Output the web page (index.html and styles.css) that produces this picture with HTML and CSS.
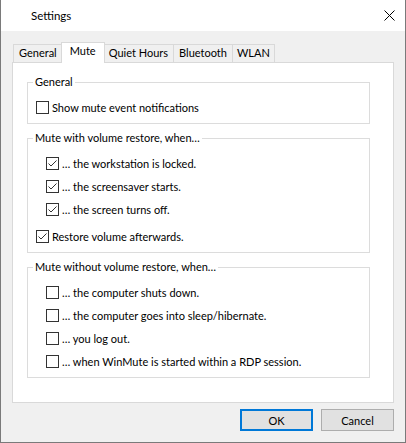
FILE: index.html
```html
<html><head>
<title>Settings</title>
<link rel="stylesheet" href="styles.css">
</head>
<body>
<div class="window">
  <div class="titlebar">
    <span class="title">Settings</span>
    <span class="close">
      <svg width="11" height="11" viewBox="0 0 11 11"><path d="M0.5 0.5 L10.5 10.5 M10.5 0.5 L0.5 10.5" stroke="#000" stroke-width="1" fill="none"/></svg>
    </span>
  </div>
  <div class="body">
    <div class="tabs">
      <div class="tab">General</div>
      <div class="tab active">Mute</div>
      <div class="tab">Quiet Hours</div>
      <div class="tab">Bluetooth</div>
      <div class="tab">WLAN</div>
    </div>
    <div class="panel">
      <div class="group">
        <div class="group-title">General</div>
        <div class="row"><span class="box"></span>Show mute event notifications</div>
      </div>

      <div class="group">
        <div class="group-title">Mute with volume restore, when…</div>
        <div class="row sub"><span class="box checked"><svg width="11" height="11" viewBox="0 0 11 11"><path d="M1.5 5.5 L4 8 L9.5 2.5" stroke="#333" stroke-width="1" fill="none"/></svg></span>… the workstation is locked.</div>
        <div class="row sub"><span class="box checked"><svg width="11" height="11" viewBox="0 0 11 11"><path d="M1.5 5.5 L4 8 L9.5 2.5" stroke="#333" stroke-width="1" fill="none"/></svg></span>… the screensaver starts.</div>
        <div class="row sub"><span class="box checked"><svg width="11" height="11" viewBox="0 0 11 11"><path d="M1.5 5.5 L4 8 L9.5 2.5" stroke="#333" stroke-width="1" fill="none"/></svg></span>… the screen turns off.</div>
        <div class="row extra"><span class="box checked"><svg width="11" height="11" viewBox="0 0 11 11"><path d="M1.5 5.5 L4 8 L9.5 2.5" stroke="#333" stroke-width="1" fill="none"/></svg></span>Restore volume afterwards.</div>
      </div>

      <div class="group">
        <div class="group-title">Mute without volume restore, when…</div>
        <div class="row sub"><span class="box"></span>… the computer shuts down.</div>
        <div class="row sub"><span class="box"></span>… the computer goes into sleep/hibernate.</div>
        <div class="row sub"><span class="box"></span>… you log out.</div>
        <div class="row sub"><span class="box"></span>… when WinMute is started within a RDP session.</div>
      </div>
    </div>
    <div class="buttons">
      <button class="btn default">OK</button>
      <button class="btn">Cancel</button>
    </div>
  </div>
</div>
</body>
</html>
```

FILE: styles.css
```css
body {
    margin: 0;
    font-family: "Segoe UI", Lato, "Noto Sans", sans-serif;
    font-size: 11px;
    color: #000;
}
.window {
    width: 406px;
    height: 443px;
    box-sizing: border-box;
    border: 1px solid #7a7a7a;
    border-top: none;
    display: flex;
    flex-direction: column;
}
.titlebar {
    height: 31px;
    flex: none;
    background: #fff;
    display: flex;
    align-items: center;
    padding: 0 10px 0 30px;
}
.title {
    line-height: 16px;
    font-size: 11.5px;
}
.close {
    margin-left: auto;
    display: flex;
}
.body {
    flex: 1;
    background: #f0f0f0;
    padding: 11px 11px 0 11px;
}
.tabs {
    display: flex;
    align-items: flex-end;
    height: 20px;
    padding-left: 1px;
}
.tab {
    height: 18px;
    box-sizing: border-box;
    border: 1px solid #d9d9d9;
    border-bottom: none;
    background: #f0f0f0;
    padding: 0 5px;
    line-height: 16px;
    margin-left: -1px;
}
.tab:first-child {
    margin-left: 0;
}
.tab:last-child {
    padding: 0 4px;
}
.tab.active {
    height: 21px;
    background: #fff;
    margin-bottom: -1px;
    padding: 0 8px 3px 8px;
    margin-left: -2px;
    margin-right: -1px;
    position: relative;
    z-index: 1;
}
.panel {
    height: 341px;
    box-sizing: border-box;
    background: #fff;
    border: 1px solid #d9d9d9;
    padding: 19px 23px 0 14px;
}
.group {
    border: 1px solid #dcdcdc;
    padding: 0 8px 4px 8px;
    margin-bottom: 14px;
}
.group-title {
    width: fit-content;
    margin: -9px 0 6px -3px;
    padding: 0 2px;
    background: #fff;
    line-height: 16px;
}
.row {
    display: flex;
    align-items: center;
    height: 23px;
    white-space: nowrap;
}
.row.sub {
    padding-left: 10px;
}
.row.extra {
    margin-top: 4px;
}
.box {
    width: 13px;
    height: 13px;
    box-sizing: border-box;
    border: 1px solid #333;
    background: #fff;
    margin-right: 3px;
    flex: none;
    display: flex;
}
.buttons {
    display: flex;
    justify-content: flex-end;
    gap: 8px;
    margin-top: 6px;
}
.btn {
    width: 73px;
    height: 22px;
    box-sizing: border-box;
    border: 1px solid #adadad;
    background: #e1e1e1;
    font-family: inherit;
    font-size: 11px;
    color: #000;
    padding: 0;
}
.btn.default {
    border: 2px solid #0078d7;
}
```
